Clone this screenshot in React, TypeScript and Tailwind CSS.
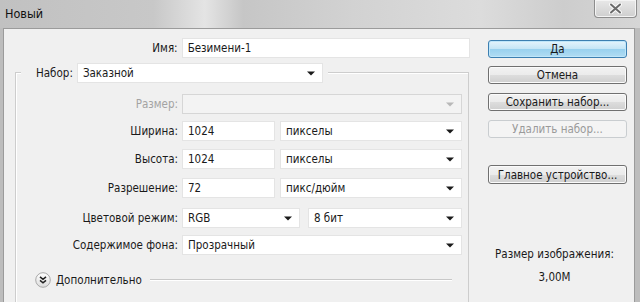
import React from "react";

function Arrow({ disabled = false }: { disabled?: boolean }) {
  return (
    <svg width="8" height="5" viewBox="0 0 8 5" className="shrink-0">
      <path d="M0 0.5h8L4 4.5z" fill={disabled ? "#b8b8b8" : "#1a1a1a"} />
    </svg>
  );
}

function Select({
  value,
  className = "",
  disabled = false,
}: {
  value: string;
  className?: string;
  disabled?: boolean;
}) {
  return (
    <div
      className={
        "h-[20px] flex items-center justify-between pl-[5px] pr-[7px] border " +
        (disabled ? "bg-[#f3f3f3] border-[#d6d6d6]" : "bg-white border-[#e4e4e4]") +
        " " +
        className
      }
    >
      <span className="whitespace-nowrap">{value}</span>
      <Arrow disabled={disabled} />
    </div>
  );
}

function Input({ value, className = "" }: { value: string; className?: string }) {
  return (
    <div className={"h-[20px] flex items-center pl-[5px] bg-white border border-[#e4e4e4] " + className}>
      {value}
    </div>
  );
}

function Row({
  label,
  mt,
  disabled = false,
  children,
}: {
  label: string;
  mt: string;
  disabled?: boolean;
  children: React.ReactNode;
}) {
  return (
    <div className={"flex items-center " + mt}>
      <div
        className={
          "w-[166px] pr-[4px] text-right whitespace-nowrap " + (disabled ? "text-[#a3a3a3]" : "")
        }
      >
        {label}
      </div>
      {children}
    </div>
  );
}

function Button({
  label,
  mt,
  kind = "normal",
  h = "h-[18px]",
}: {
  label: string;
  mt: string;
  kind?: "normal" | "default" | "disabled";
  h?: string;
}) {
  const cls =
    kind === "default"
      ? "border-[#3c7fb1] bg-[linear-gradient(#e5f4fc_0%,#c4e5f6_50%,#98d1ef_51%,#b1dcf3_100%)] shadow-[inset_0_0_0_1px_#bfe6fa]"
      : kind === "disabled"
      ? "border-[#c9cdd0] bg-[#f4f4f4] text-[#9a9a9a]"
      : "border-[#707070] bg-[linear-gradient(#f2f2f2_0%,#ebebeb_50%,#dddddd_51%,#cfcfcf_100%)] shadow-[inset_0_0_0_1px_#fbfbfb]";
  return (
    <div
      className={
        "ml-[18px] w-[139px] rounded-[3px] border flex items-center justify-center whitespace-nowrap " +
        h +
        " " +
        mt +
        " " +
        cls
      }
    >
      {label}
    </div>
  );
}

export default function App() {
  return (
    <div className="w-[640px] h-[302px] overflow-hidden flex flex-col bg-[#bdbdbd] text-[11.5px] leading-[14px] text-[#1a1a1a] font-['DejaVu_Sans_Condensed','DejaVu_Sans',Tahoma,sans-serif]">
      {/* Title bar */}
      <div className="h-[28px] shrink-0 flex items-start justify-between bg-[linear-gradient(90deg,#c1c1c1_0%,#c8c8c8_24%,#e4e4e4_32%,#c6c6c6_38%,#d2d2d2_55%,#dcdcdc_75%,#cdcdcd_88%,#d6d6d6_100%)]">
        <div className="pl-[5px] pt-[7px] text-[12.5px] text-[#111]">Новый</div>
        <div className="mr-[3px] w-[43px] h-[18px] border border-t-0 border-[#8d8d8d] rounded-b-[4px] bg-[linear-gradient(#e8e8e8,#cfcfcf)] shadow-[inset_0_0_0_1px_#f4f4f4] flex items-center justify-center">
          <svg width="13" height="11" viewBox="0 0 13 11">
            <path d="M2 1.5L11 9.5M11 1.5L2 9.5" stroke="#fafafa" strokeWidth="4" strokeLinecap="round" />
            <path d="M2 1.5L11 9.5M11 1.5L2 9.5" stroke="#6b6b6b" strokeWidth="2" strokeLinecap="round" />
          </svg>
        </div>
      </div>

      {/* Body */}
      <div className="flex-1 ml-[3px] mr-[5px] border-l border-t border-r border-[#9b9b9b] bg-[#f0f0f0] flex">
        {/* Left column */}
        <div className="w-[466px] shrink-0 flex flex-col">
          <div className="flex items-center mt-[9px]">
            <div className="w-[178px] pr-[4px] text-right">Имя:</div>
            <Input value="Безимени-1" className="w-[289px]" />
          </div>

          <div className="mt-[14px] ml-[11px] w-[454px] flex-1 border-l border-t border-r border-[#cdcdcd] shadow-[inset_1px_1px_0_#ffffff] flex flex-col">
            {/* Legend */}
            <div className="-mt-[10px] ml-[5px] self-start bg-[#f0f0f0] flex items-center pl-[15px] pr-[5px]">
              <span className="mr-[4px]">Набор:</span>
              <Select value="Заказной" className="w-[246px]" />
            </div>

            <Row label="Размер:" mt="mt-[11px]" disabled>
              <Select value="" disabled className="w-[280px]" />
            </Row>
            <Row label="Ширина:" mt="mt-[7px]">
              <Input value="1024" className="w-[93px]" />
              <Select value="пикселы" className="w-[182px] ml-[5px]" />
            </Row>
            <Row label="Высота:" mt="mt-[8px]">
              <Input value="1024" className="w-[93px]" />
              <Select value="пикселы" className="w-[182px] ml-[5px]" />
            </Row>
            <Row label="Разрешение:" mt="mt-[9px]">
              <Input value="72" className="w-[93px]" />
              <Select value="пикс/дюйм" className="w-[182px] ml-[5px]" />
            </Row>
            <Row label="Цветовой режим:" mt="mt-[10px]">
              <Select value="RGB" className="w-[118px]" />
              <Select value="8 бит" className="w-[154px] ml-[8px]" />
            </Row>
            <Row label="Содержимое фона:" mt="mt-[7px]">
              <Select value="Прозрачный" className="w-[280px]" />
            </Row>

            <div className="flex items-center mt-[17px] ml-[19px] mr-[16px]">
              <svg width="16" height="16" viewBox="0 0 16 16" className="shrink-0">
                <defs>
                  <linearGradient id="cg" x1="0" y1="0" x2="0" y2="1">
                    <stop offset="0" stopColor="#ffffff" />
                    <stop offset="1" stopColor="#dcdcdc" />
                  </linearGradient>
                </defs>
                <circle cx="8" cy="8" r="7.3" fill="url(#cg)" stroke="#a9a9a9" strokeWidth="1" />
                <path d="M5 4.8L8 7.3L11 4.8M5 8.3L8 10.8L11 8.3" fill="none" stroke="#222" strokeWidth="1.5" />
              </svg>
              <span className="ml-[5px]">Дополнительно</span>
              <div className="flex-1 ml-[8px] h-[2px] border-t border-[#c8c8c8] border-b-white border-b" />
            </div>
          </div>
        </div>

        {/* Right column */}
        <div className="flex-1 flex flex-col">
          <Button label="Да" mt="mt-[11px]" kind="default" />
          <Button label="Отмена" mt="mt-[8px]" />
          <Button label="Сохранить набор..." mt="mt-[9px]" />
          <Button label="Удалить набор..." mt="mt-[9px]" kind="disabled" />
          <Button label="Главное устройство..." mt="mt-[27px]" h="h-[19px]" />
          <div className="mt-[63px] text-center pl-[5px]">Размер изображения:</div>
          <div className="mt-[9px] text-center pl-[5px]">3,00M</div>
        </div>
      </div>
    </div>
  );
}
